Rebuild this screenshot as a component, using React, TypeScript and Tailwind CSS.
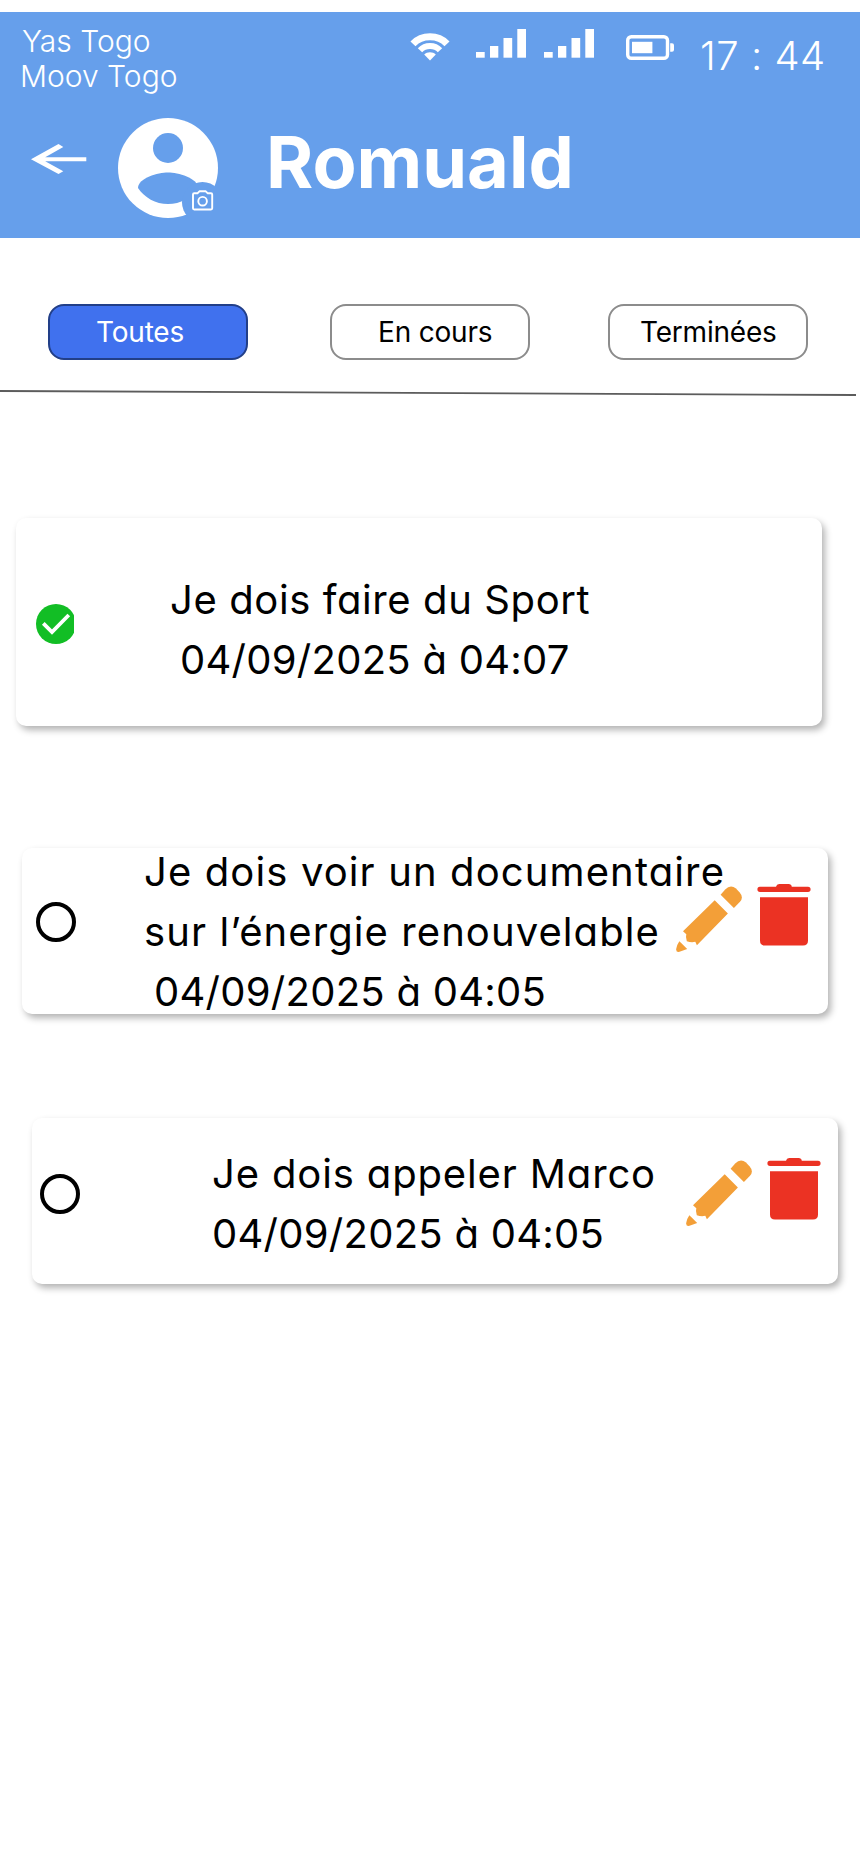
type Line = { text: string; className: string };

type Task = {
  done: boolean;
  card: string;
  marker: string;
  block: string;
  lines: Line[];
  actions?: string;
};

const tasks: Task[] = [
  {
    done: true,
    card: 'ml-[16px] h-[208px]',
    marker: 'ml-[20px] mt-[86px] w-[38px]',
    block: 'ml-[96px] mt-[52px]',
    lines: [
      { text: 'Je dois faire du Sport', className: 'tracking-[0.6px]' },
      { text: '04/09/2025 à 04:07', className: 'pl-[10px] tracking-[0.26px]' },
    ],
  },
  {
    done: false,
    card: 'ml-[22px] mt-[122px] h-[166px]',
    marker: 'ml-[14px] mt-[54px] w-[40px]',
    block: 'ml-[68px] -mt-[6px]',
    lines: [
      { text: 'Je dois voir un documentaire', className: 'tracking-[1.12px]' },
      { text: 'sur l’énergie renouvelable', className: 'tracking-[1.08px]' },
      { text: '04/09/2025 à 04:05', className: 'pl-[10px] tracking-[0.26px]' },
    ],
    actions: 'mt-[36px]',
  },
  {
    done: false,
    card: 'ml-[32px] mt-[104px] h-[166px]',
    marker: 'ml-[8px] mt-[56px] w-[40px]',
    block: 'ml-[132px] mt-[26px]',
    lines: [
      { text: 'Je dois appeler Marco', className: 'tracking-[0.86px]' },
      { text: '04/09/2025 à 04:05', className: 'tracking-[0.26px]' },
    ],
    actions: 'mt-[40px]',
  },
];

function Wifi() {
  return (
    <svg className="ml-[410px] mt-[20px] h-[30px] w-[40px] shrink-0" viewBox="0 0 40 30" fill="none" stroke="#fff">
      <path d="M3 11.8C12 2.4 28 2.4 37 11.8" strokeWidth="7" />
      <path d="M10 18.3C15.3 12.7 24.7 12.7 30 18.3" strokeWidth="6" />
      <path d="M14.2 22.6C17.2 19.4 22.8 19.4 25.8 22.6L20 28.6Z" fill="#fff" stroke="none" />
    </svg>
  );
}

function Signal({ className }: { className: string }) {
  return (
    <svg className={`mt-[17px] h-[29px] w-[50px] shrink-0 ${className}`} viewBox="0 0 50 29" fill="#fff">
      <rect x="0" y="23" width="8.7" height="5.7" />
      <rect x="14" y="17" width="8.3" height="11.7" />
      <rect x="27.5" y="9" width="8.7" height="19.7" />
      <rect x="41.3" y="0" width="8.7" height="28.7" />
    </svg>
  );
}

function Battery() {
  return (
    <svg className="ml-[32px] mt-[23px] h-[25px] w-[48px] shrink-0" viewBox="0 0 48 25" fill="#fff">
      <rect x="1.7" y="1.7" width="39.8" height="21.6" rx="3.6" fill="none" stroke="#fff" strokeWidth="3.4" />
      <rect x="6" y="6.8" width="20.4" height="11.4" />
      <path d="M44.2 8.2h1.8q2 0 2 2v4.6q0 2-2 2h-1.8z" />
    </svg>
  );
}

function BackArrow() {
  return (
    <svg className="ml-[31px] mt-[44px] h-[32px] w-[56px] shrink-0" viewBox="0 0 56 32" fill="#fff">
      <path d="M55.3 13.2H14.2L32.3 3L27.5 0L0 15.2L27.5 30L32.3 27.3L14.2 17.2H55.3Z" />
    </svg>
  );
}

function Avatar() {
  return (
    <svg className="ml-[31px] mt-[18px] h-[100px] w-[100px] shrink-0" viewBox="0 0 100 100">
      <circle cx="50" cy="50" r="50" fill="#fff" />
      <circle cx="50" cy="30" r="15" fill="#669feb" />
      <path d="M50 86C37.5 86 26.5 79.6 20 69.9C20.2 60 40 54.5 50 54.5S79.8 60 80 69.9C73.5 79.6 62.5 86 50 86Z" fill="#669feb" />
      <circle cx="84.5" cy="84.5" r="20.5" fill="#669feb" />
      <g fill="none" stroke="#fff" strokeWidth="1.9" strokeLinejoin="round">
        <path d="M76.2 75.3h3.2l2-2h6.4l2 2h3.2q1.2 0 1.2 1.2v13.8q0 1.2-1.2 1.2H76.2q-1.2 0-1.2-1.2V76.5q0-1.2 1.2-1.2Z" />
        <circle cx="84.6" cy="83.2" r="4.3" />
      </g>
    </svg>
  );
}

function Marker({ done, className }: { done: boolean; className: string }) {
  if (done) {
    return (
      <svg className={`h-[40px] shrink-0 ${className}`} viewBox="0 0 38 40">
        <circle cx="20" cy="20" r="20" fill="#12be25" />
        <path d="M7.3 19.3L16 28L32.8 11" fill="none" stroke="#fff" strokeWidth="3.8" />
      </svg>
    );
  }
  return (
    <svg className={`h-[40px] shrink-0 ${className}`} viewBox="0 0 40 40">
      <circle cx="20" cy="20" r="18" fill="none" stroke="#000" strokeWidth="4" />
    </svg>
  );
}

function Actions({ className }: { className: string }) {
  return (
    <div className={`absolute right-[17px] top-0 flex items-start ${className}`}>
      <svg className="mt-[2px] h-[66px] w-[66px]" viewBox="0 0 66 66" fill="#f39f38">
        <path d="M44.6 8.8L49.2 3.4Q54.6-2 60 2.6L63.5 6.3Q68 11.3 64 15.7L57.9 22.1Z" />
        <path d="M38.7 14.2L51.9 27.6L20.9 59.2L19.3 55.8Q15.5 57 10.8 55.2Q9.4 51 10.3 48.2L7 45.2Z" />
        <path d="M3.4 55.2L11.2 63L3.5 65.8Q0 66.6 .2 63Q.8 58.6 3.4 55.2Z" />
      </svg>
      <svg className="ml-[15px] h-[62px] w-[54px]" viewBox="0 0 54 62" fill="#eb3223">
        <path d="M19 2.7Q19.6 0 22.2 0H31.6Q34.4 0 34.8 2.7H51Q53.6 2.7 53.6 5.3T51 8H3Q.4 8 .4 5.3T3 2.7Z" />
        <path d="M3 13.3H51V56.5Q51 61.6 46 61.6H8Q3 61.6 3 56.5Z" />
      </svg>
    </div>
  );
}

function TaskCard({ task }: { task: Task }) {
  return (
    <li
      className={`relative flex w-[806px] items-start rounded-[10px] bg-white shadow-[3px_4px_7px_rgba(0,0,0,0.3)] ${task.card}`}
    >
      <Marker done={task.done} className={task.marker} />
      <div className={`flex flex-col text-[40px] leading-[60px] whitespace-nowrap [font-feature-settings:'cv11'] ${task.block}`}>
        {task.lines.map((line) => (
          <span key={line.text} className={line.className}>
            {line.text}
          </span>
        ))}
      </div>
      {task.actions && <Actions className={task.actions} />}
    </li>
  );
}

export default function App() {
  return (
    <div className="min-h-[1864px] w-[860px] overflow-hidden bg-white pt-[12px] font-['Inter',sans-serif] text-black">
      <header className="h-[226px] bg-[#669feb] text-white">
        <div className="flex h-[88px] items-start">
          <div className="-mr-[410px] w-[410px] shrink-0 pt-[12px] pl-[20px] text-[30px] leading-[35px] font-[340]">
            <p className="pl-[2px]">Yas Togo</p>
            <p>Moov Togo</p>
          </div>
          <Wifi />
          <Signal className="ml-[26px]" />
          <Signal className="ml-[18px]" />
          <Battery />
          <span className="mt-[20px] ml-[26px] text-[40px] leading-[48px] font-[340] tracking-[0.5px] whitespace-nowrap">
            17 : 44
          </span>
        </div>
        <div className="flex items-start">
          <BackArrow />
          <Avatar />
          <h1 className="mt-[18px] ml-[48px] text-[72px] leading-[88px] font-bold">Romuald</h1>
        </div>
      </header>

      <nav className="mt-[66px] flex pl-[48px] text-[28px] leading-[52px] tracking-[-0.2px]">
        <button className="h-[56px] w-[200px] rounded-[16px] border-2 border-[#223f88] bg-[#4071ee] pl-[46px] text-left font-[370] text-white">
          Toutes
        </button>
        <button className="ml-[82px] h-[56px] w-[200px] rounded-[16px] border-2 border-[#8c8c8c] bg-white pl-[46px] text-left font-[370]">
          En cours
        </button>
        <button className="ml-[78px] h-[56px] w-[200px] rounded-[16px] border-2 border-[#8c8c8c] bg-white pl-[30px] text-left font-[370]">
          Terminées
        </button>
      </nav>

      <svg className="mt-[28px] block h-[10px] w-[860px]" viewBox="0 0 860 10">
        <path d="M0 3L856 7" stroke="#5c5c5c" strokeWidth="1.8" />
      </svg>

      <ul className="mt-[120px]">
        {tasks.map((task) => (
          <TaskCard key={task.lines[0].text} task={task} />
        ))}
      </ul>
    </div>
  );
}
